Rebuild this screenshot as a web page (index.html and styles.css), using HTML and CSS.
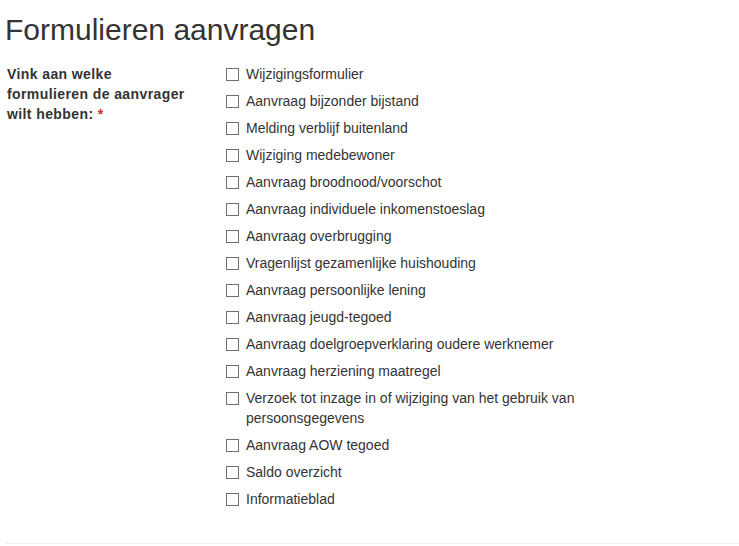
FILE: index.html
```html
<!DOCTYPE html>
<html lang="nl">
<head>
<meta charset="utf-8">
<title>Formulieren aanvragen</title>
<link rel="stylesheet" href="styles.css">
</head>
<body>
<div class="page">
  <h1 class="title">Formulieren aanvragen</h1>
  <form class="form-row">
    <div class="field-label">Vink aan welke formulieren de aanvrager wilt hebben: <span class="req">*</span></div>
    <div class="options">
      <label class="option"><input type="checkbox" class="box"><span>Wijzigingsformulier</span></label>
      <label class="option"><input type="checkbox" class="box"><span>Aanvraag bijzonder bijstand</span></label>
      <label class="option"><input type="checkbox" class="box"><span>Melding verblijf buitenland</span></label>
      <label class="option"><input type="checkbox" class="box"><span>Wijziging medebewoner</span></label>
      <label class="option"><input type="checkbox" class="box"><span>Aanvraag broodnood/voorschot</span></label>
      <label class="option"><input type="checkbox" class="box"><span>Aanvraag individuele inkomenstoeslag</span></label>
      <label class="option"><input type="checkbox" class="box"><span>Aanvraag overbrugging</span></label>
      <label class="option"><input type="checkbox" class="box"><span>Vragenlijst gezamenlijke huishouding</span></label>
      <label class="option"><input type="checkbox" class="box"><span>Aanvraag persoonlijke lening</span></label>
      <label class="option"><input type="checkbox" class="box"><span>Aanvraag jeugd-tegoed</span></label>
      <label class="option"><input type="checkbox" class="box"><span>Aanvraag doelgroepverklaring oudere werknemer</span></label>
      <label class="option"><input type="checkbox" class="box"><span>Aanvraag herziening maatregel</span></label>
      <label class="option"><input type="checkbox" class="box"><span>Verzoek tot inzage in of wijziging van het gebruik van persoonsgegevens</span></label>
      <label class="option"><input type="checkbox" class="box"><span>Aanvraag AOW tegoed</span></label>
      <label class="option"><input type="checkbox" class="box"><span>Saldo overzicht</span></label>
      <label class="option"><input type="checkbox" class="box"><span>Informatieblad</span></label>
    </div>
  </form>
  <hr class="divider">
</div>
</body>
</html>
```

FILE: styles.css
```css
html, body {
  margin: 0;
  padding: 0;
  background: #fff;
}

.page {
  padding: 0 0 0 5px;
  font-family: "Liberation Sans", Arial, sans-serif;
  color: #333;
  font-size: 14px;
  line-height: 20px;
}

.title {
  margin: 13px 0 0 0;
  font-size: 30px;
  line-height: 33px;
  font-weight: normal;
  color: #333;
}

.form-row {
  display: grid;
  grid-template-columns: 221px 360px;
  margin-top: 16px;
}

.field-label {
  font-weight: bold;
  padding: 2px 0 0 2px;
  width: 186px;
  letter-spacing: 0.4px;
}

.req {
  color: #c9302c;
  font-weight: bold;
  letter-spacing: 0;
}

.options {
  display: flex;
  flex-direction: column;
  gap: 7px;
  padding-top: 2px;
}

.option {
  display: flex;
  align-items: flex-start;
  gap: 7px;
  cursor: pointer;
}

.box {
  appearance: none;
  -webkit-appearance: none;
  flex: 0 0 auto;
  width: 13px;
  height: 13px;
  margin: 4px 0 0 0;
  border: 1px solid #707070;
  border-radius: 0;
  background: #fff;
  box-sizing: border-box;
}

.divider {
  margin: 34px 0 0 0;
  border: 0;
  border-top: 1px solid #eee;
  height: 0;
}
```
